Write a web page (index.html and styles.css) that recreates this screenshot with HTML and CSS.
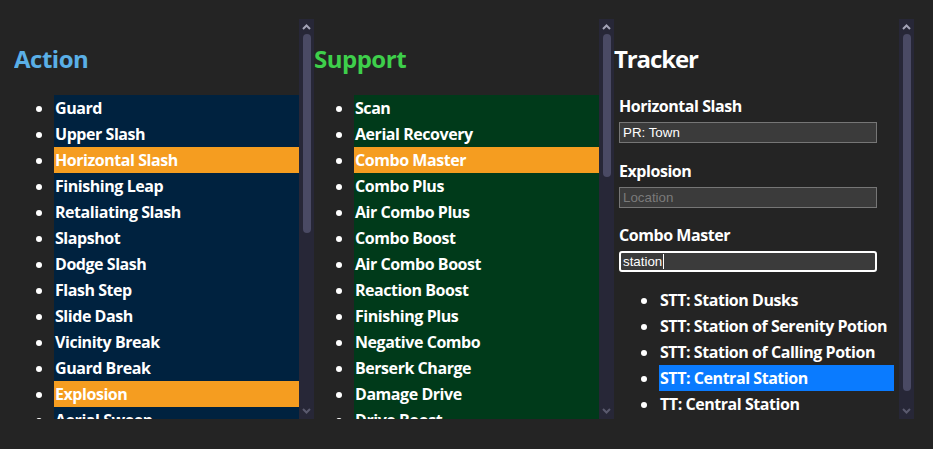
FILE: index.html
```html
<!DOCTYPE html>
<html lang="en">
<head>
<meta charset="utf-8">
<title>Ability Tracker</title>
<link rel="stylesheet" href="styles.css">
</head>
<body>
<main class="board">
  <section class="column">
    <div class="scroll-area">
      <h2 class="heading heading-action">Action</h2>
      <ul class="abilities abilities-action">
        <li>Guard</li>
        <li>Upper Slash</li>
        <li class="picked">Horizontal Slash</li>
        <li>Finishing Leap</li>
        <li>Retaliating Slash</li>
        <li>Slapshot</li>
        <li>Dodge Slash</li>
        <li>Flash Step</li>
        <li>Slide Dash</li>
        <li>Vicinity Break</li>
        <li>Guard Break</li>
        <li class="picked">Explosion</li>
        <li>Aerial Sweep</li>
        <li>Aerial Dive</li>
        <li>Aerial Spiral</li>
        <li>Aerial Finish</li>
        <li>Magnet Burst</li>
        <li>Counterguard</li>
        <li>Auto Valor</li>
        <li>Auto Wisdom</li>
        <li>Auto Limit</li>
        <li>Auto Master</li>
        <li>Auto Final</li>
        <li>Auto Summon</li>
        <li>Trinity Limit</li>
      </ul>
    </div>
    <div class="scrollbar" aria-hidden="true">
      <svg class="arrow arrow-up" width="15" height="15" viewBox="0 0 15 15"><path d="M4 10 L7.5 6.5 L11 10" fill="none" stroke="currentColor" stroke-width="2"/></svg>
      <div class="track"><div class="thumb" style="height:199px"></div></div>
      <svg class="arrow arrow-down" width="15" height="15" viewBox="0 0 15 15"><path d="M4 5 L7.5 8.5 L11 5" fill="none" stroke="currentColor" stroke-width="2"/></svg>
    </div>
  </section>
  <section class="column">
    <div class="scroll-area">
      <h2 class="heading heading-support">Support</h2>
      <ul class="abilities abilities-support">
        <li>Scan</li>
        <li>Aerial Recovery</li>
        <li class="picked">Combo Master</li>
        <li>Combo Plus</li>
        <li>Air Combo Plus</li>
        <li>Combo Boost</li>
        <li>Air Combo Boost</li>
        <li>Reaction Boost</li>
        <li>Finishing Plus</li>
        <li>Negative Combo</li>
        <li>Berserk Charge</li>
        <li>Damage Drive</li>
        <li>Drive Boost</li>
        <li>Form Boost</li>
        <li>Summon Boost</li>
        <li>Combination Boost</li>
        <li>Experience Boost</li>
        <li>Leaf Bracer</li>
        <li>Magic Lock-On</li>
        <li>No Experience</li>
        <li>Draw</li>
        <li>Jackpot</li>
        <li>Lucky Lucky</li>
        <li>Fire Boost</li>
        <li>Blizzard Boost</li>
        <li>Thunder Boost</li>
        <li>Item Boost</li>
        <li>MP Rage</li>
        <li>MP Haste</li>
        <li>MP Hastera</li>
        <li>MP Hastega</li>
        <li>Defender</li>
        <li>Damage Control</li>
        <li>Light &amp; Darkness</li>
        <li>Once More</li>
        <li>Second Chance</li>
      </ul>
    </div>
    <div class="scrollbar" aria-hidden="true">
      <svg class="arrow arrow-up" width="15" height="15" viewBox="0 0 15 15"><path d="M4 10 L7.5 6.5 L11 10" fill="none" stroke="currentColor" stroke-width="2"/></svg>
      <div class="track"><div class="thumb" style="height:143px"></div></div>
      <svg class="arrow arrow-down" width="15" height="15" viewBox="0 0 15 15"><path d="M4 5 L7.5 8.5 L11 5" fill="none" stroke="currentColor" stroke-width="2"/></svg>
    </div>
  </section>
  <section class="column">
    <div class="scroll-area">
      <h2 class="heading heading-tracker">Tracker</h2>
      <div class="tracker">
        <div class="entry">
          <label class="entry-label" for="loc1">Horizontal Slash</label>
          <input class="entry-input" id="loc1" type="text" value="PR: Town" placeholder="Location">
        </div>
        <div class="entry">
          <label class="entry-label" for="loc2">Explosion</label>
          <input class="entry-input" id="loc2" type="text" placeholder="Location">
        </div>
        <div class="entry">
          <span class="entry-label">Combo Master</span>
          <div class="entry-input entry-input-active">station<span class="caret"></span></div>
        </div>
        <ul class="suggestions">
          <li>STT: Station Dusks</li>
          <li>STT: Station of Serenity Potion</li>
          <li>STT: Station of Calling Potion</li>
          <li class="selected">STT: Central Station</li>
          <li>TT: Central Station</li>
        </ul>
      </div>
    </div>
    <div class="scrollbar" aria-hidden="true">
      <svg class="arrow arrow-up" width="15" height="15" viewBox="0 0 15 15"><path d="M4 10 L7.5 6.5 L11 10" fill="none" stroke="currentColor" stroke-width="2"/></svg>
      <div class="track"><div class="thumb" style="height:357px"></div></div>
      <svg class="arrow arrow-down" width="15" height="15" viewBox="0 0 15 15"><path d="M4 5 L7.5 8.5 L11 5" fill="none" stroke="currentColor" stroke-width="2"/></svg>
    </div>
  </section>
</main>
</body>
</html>
```

FILE: styles.css
```css
html, body {
  margin: 0;
  padding: 0;
  background: #242424;
  color: #ffffff;
  font-family: "Open Sans", "Noto Sans", sans-serif;
}

.board {
  display: flex;
  padding: 19px 0 0 14px;
}

.column {
  display: flex;
  width: 300px;
  height: 400px;
  flex: none;
}

.scroll-area {
  flex: 1;
  min-width: 0;
  overflow: hidden;
}

.scrollbar {
  width: 15px;
  flex: none;
  display: flex;
  flex-direction: column;
  align-items: center;
  background: #272737;
}

.arrow {
  display: block;
  flex: none;
}

.arrow-up { color: #a3a3b6; }
.arrow-down { color: #5a5a6e; }

.track {
  flex: 1;
  width: 8px;
}

.thumb {
  width: 8px;
  border-radius: 4px;
  background: #4a4a64;
}

.heading {
  margin: 24px 0 20px 0;
  font-size: 24px;
  line-height: 32px;
  font-weight: 700;
  letter-spacing: -0.5px;
}

.heading-action { color: #5aafe6; }
.heading-support { color: #3ecf4b; }
.heading-tracker { color: #ffffff; letter-spacing: -1.1px; }

.abilities {
  margin: 0 0 16px 0;
  padding-left: 40px;
}

.abilities li,
.suggestions li {
  font-size: 16px;
  line-height: 26px;
  font-weight: 700;
  letter-spacing: -0.45px;
  padding-left: 1px;
}

.abilities-action li { background: #00223f; }
.abilities-support li { background: #003a1a; }

.abilities li.picked { background: #f59d20; }

.tracker {
  padding: 0 5px;
}

.entry + .entry {
  margin-top: 16.5px;
}

.entry-label {
  display: block;
  font-size: 16px;
  line-height: 22px;
  font-weight: 700;
  letter-spacing: -0.45px;
  margin-bottom: 5px;
}

.entry-input {
  display: block;
  box-sizing: border-box;
  width: 258px;
  height: 21px;
  margin: 0;
  padding: 0 3px;
  background: #3b3b3b;
  border: 1px solid #767676;
  color: #ffffff;
  font-family: "Liberation Sans", Arial, sans-serif;
  font-size: 13.3333px;
  line-height: 19px;
  outline: none;
}

.entry-input::placeholder {
  color: #7a7a7a;
}

.entry-input-active {
  border: 2px solid #ffffff;
  border-radius: 3px;
  line-height: 17px;
  padding: 0 2px;
}

.caret {
  display: inline-block;
  width: 1px;
  height: 15px;
  background: #ffffff;
  vertical-align: -3px;
  margin-left: 1px;
}

.suggestions {
  margin: 14.5px 0 16px 0;
  padding-left: 40px;
}

.suggestions li.selected {
  background: #0a7bff;
}
```
